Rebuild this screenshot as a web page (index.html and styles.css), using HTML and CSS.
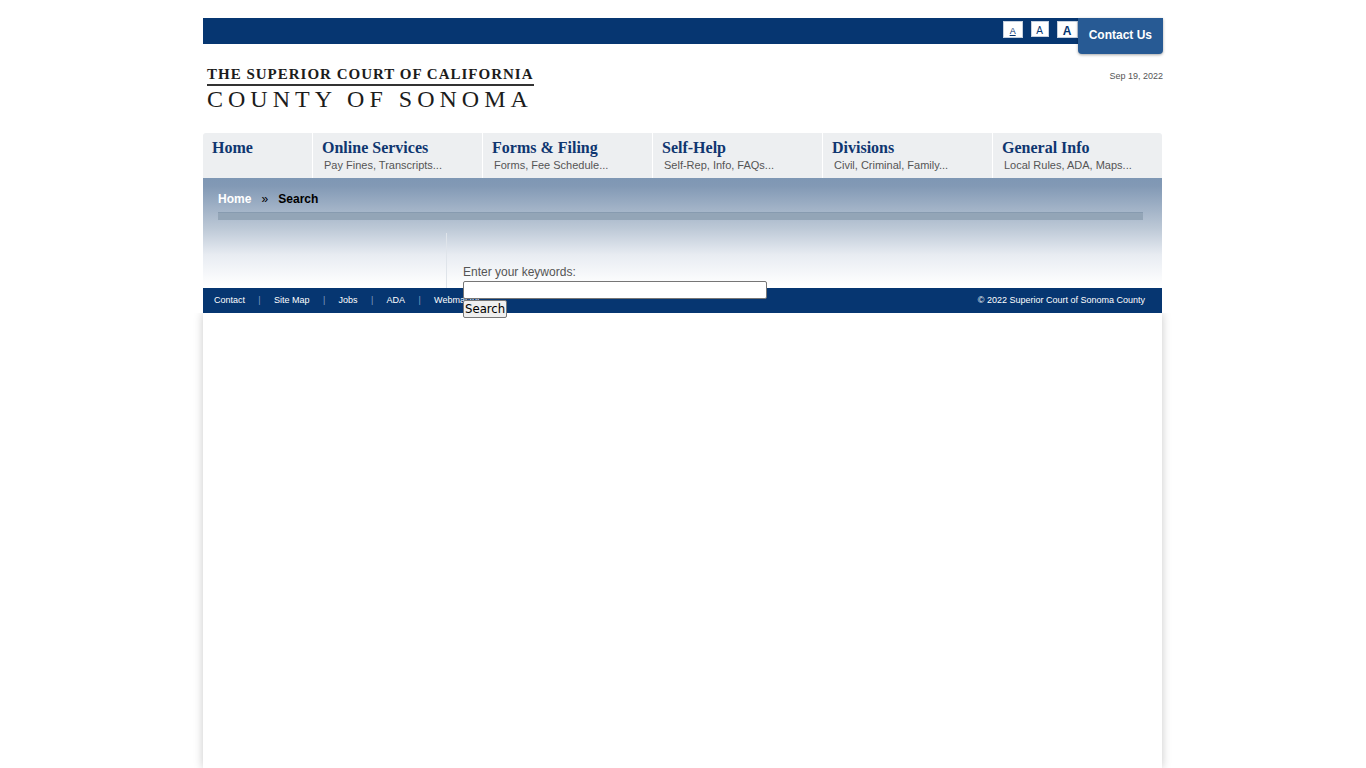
FILE: index.html
```html
<!DOCTYPE html>
<html lang="en">
<head>
<meta charset="utf-8">
<meta name="viewport" content="width=device-width, initial-scale=1">
<title>Search | Superior Court of Sonoma County</title>
<link rel="stylesheet" href="styles.css">
</head>
<body>
<div class="page">
  <div class="topbar">
    <div class="sizes">
      <button type="button" class="size size-small" aria-label="Small text">A</button>
      <button type="button" class="size size-medium" aria-label="Medium text">A</button>
      <button type="button" class="size size-large" aria-label="Large text">A</button>
    </div>
    <a class="contact" href="#">Contact Us</a>
  </div>
  <header class="header">
    <a class="logo" href="#">
      <span class="logo-court">THE SUPERIOR COURT OF CALIFORNIA</span>
      <span class="logo-county">COUNTY OF SONOMA</span>
    </a>
    <div class="date">Sep 19, 2022</div>
  </header>
  <nav class="nav">
    <a class="nav-item" href="#"><span class="nav-title">Home</span></a>
    <a class="nav-item" href="#"><span class="nav-title">Online Services</span><span class="nav-sub">Pay Fines, Transcripts...</span></a>
    <a class="nav-item" href="#"><span class="nav-title">Forms &amp; Filing</span><span class="nav-sub">Forms, Fee Schedule...</span></a>
    <a class="nav-item" href="#"><span class="nav-title">Self-Help</span><span class="nav-sub">Self-Rep, Info, FAQs...</span></a>
    <a class="nav-item" href="#"><span class="nav-title">Divisions</span><span class="nav-sub">Civil, Criminal, Family...</span></a>
    <a class="nav-item" href="#"><span class="nav-title">General Info</span><span class="nav-sub">Local Rules, ADA, Maps...</span></a>
  </nav>
  <main class="main">
    <div class="crumbs"><a href="#">Home</a><span class="crumb-sep">»</span><strong>Search</strong></div>
    <div class="rule"></div>
    <div class="columns">
      <div class="sidebar"></div>
      <div class="content">
        <form class="search">
          <label for="keywords">Enter your keywords:</label>
          <input id="keywords" type="text">
          <button type="button">Search</button>
        </form>
      </div>
    </div>
  </main>
  <footer class="footer">
    <div class="links">
      <a href="#">Contact</a><span>|</span><a href="#">Site Map</a><span>|</span><a href="#">Jobs</a><span>|</span><a href="#">ADA</a><span>|</span><a href="#">Webmaster</a>
    </div>
    <div>© 2022 Superior Court of Sonoma County</div>
  </footer>
  <div class="tail"></div>
</div>
</body>
</html>
```
FILE: styles.css
```css
* { box-sizing: border-box; }
body {
  margin: 0;
  background: #fff;
  color: #555;
  font: 12px/16px "Liberation Sans", Arial, sans-serif;
}
a { text-decoration: none; color: inherit; }
.page {
  display: flex;
  flex-direction: column;
  max-width: 960px;
  min-height: 100vh;
  margin: 0 auto;
  padding-top: 18px;
}
.topbar {
  display: flex;
  justify-content: flex-end;
  align-items: flex-start;
  height: 26px;
  background: #063671;
}
.sizes { display: flex; gap: 8px; padding-top: 3px; }
.size {
  width: 20px;
  height: 17px;
  padding: 2px 0 0;
  border: 1px solid #c5d0de;
  background: #fff;
  color: #063671;
  font: 10px/14px "Liberation Sans", Arial, sans-serif;
}
.size-small { font-size: 9px; text-decoration: underline; }
.size-medium { width: 18px; height: 16px; }
.size-large { width: 21px; font-size: 12px; font-weight: bold; }
.contact {
  padding: 9px 11px 11px;
  border-radius: 0 0 4px 4px;
  background: #275a94;
  box-shadow: 0 1px 3px rgba(0, 0, 0, 0.35);
  color: #fff;
  font-weight: bold;
}
.header {
  display: flex;
  justify-content: space-between;
  align-items: flex-start;
  height: 89px;
  padding: 21px 0 0 4px;
}
.logo {
  display: flex;
  flex-direction: column;
  color: #1c1c1c;
  font-family: "Liberation Serif", "Times New Roman", serif;
  white-space: nowrap;
}
.logo-court {
  border-bottom: 2px solid #333;
  font-size: 15px;
  font-weight: bold;
  line-height: 19px;
  letter-spacing: 1px;
}
.logo-county { font-size: 24px; line-height: 26px; letter-spacing: 5px; }
.date { padding-top: 3px; font-size: 9px; }
.nav {
  display: grid;
  grid-template-columns: 109fr repeat(5, 169fr);
  gap: 1px;
  margin-right: 1px;
}
.nav-item {
  height: 45px;
  padding: 6px 9px 0;
  background: #edeff1;
  white-space: nowrap;
}
.nav-item:first-child { border-top-left-radius: 3px; }
.nav-item:last-child { border-top-right-radius: 3px; }
.nav-title {
  display: block;
  color: #0f3670;
  font: bold 16px/18px "Liberation Serif", "Times New Roman", serif;
}
.nav-sub { display: block; padding-left: 2px; font-size: 11px; }
.main {
  position: relative;
  z-index: 1;
  display: flex;
  flex-direction: column;
  height: 110px;
  margin-right: 1px;
  padding: 13px 19px 0 15px;
  background: linear-gradient(#7e97b4 0, #8299b5 8px, #bcc8d6 50px, #e8ecf2 77px, #fff 108px);
}
.crumbs { display: flex; color: #000; }
.crumbs a { color: #fff; font-weight: bold; }
.crumb-sep { width: 27px; text-align: center; }
.rule { height: 8px; margin-top: 5px; border-top: 1px solid #879bb0; background: #93a5b7; }
.columns { display: flex; flex: 1; padding-top: 13px; }
.sidebar { width: 229px; border-right: 1px solid #dfe4ea; }
.content { position: relative; flex: 1; }
.search {
  position: absolute;
  top: 31px;
  left: 16px;
  display: flex;
  flex-direction: column;
  align-items: flex-start;
  gap: 1px;
}
.search input {
  width: 304px;
  height: 18px;
  border: 1px solid #767676;
  border-radius: 2px;
  background: #fff;
}
.search button {
  height: 18px;
  padding: 0 1px;
  border: 1px solid #767676;
  border-radius: 2px;
  background: #efefef;
  color: #000;
  font: 13px/16px "DejaVu Sans Condensed", Tahoma, sans-serif;
}
.footer {
  display: flex;
  justify-content: space-between;
  height: 25px;
  margin-right: 1px;
  padding: 0 17px 0 11px;
  background: #063671;
  color: #fff;
  font-size: 9px;
  line-height: 24px;
}
.links { display: flex; }
.links span { width: 29px; text-align: center; color: #7f9cc0; }
.tail {
  flex: 1;
  margin-right: 1px;
  box-shadow: 0 0 9px rgba(0, 0, 0, 0.22);
  clip-path: inset(0 -10px);
}
```
